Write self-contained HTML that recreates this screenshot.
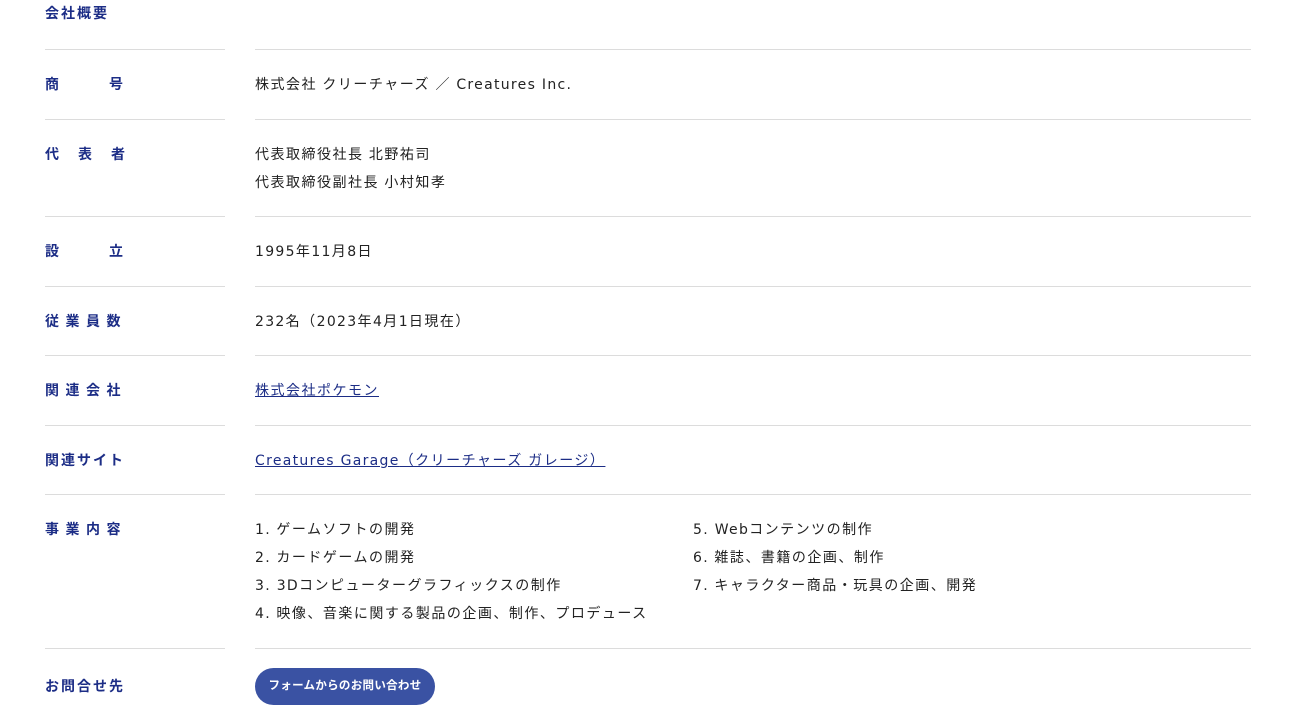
<!DOCTYPE html>
<html><head><meta charset="utf-8"><style>
body{margin:0;width:1293px;height:719px;background:#fff;position:relative;overflow:hidden;font-family:"Liberation Sans","Noto Sans CJK JP",sans-serif;}
.l{position:absolute;height:1px;background:#dcdcdc;}
.lab{position:absolute;left:45px;font-size:14px;font-weight:bold;color:#1c2d86;line-height:20px;letter-spacing:2px;white-space:nowrap;}
.t{position:absolute;font-size:14px;color:#222;line-height:20px;letter-spacing:1.5px;white-space:nowrap;}
.e{font-family:"DejaVu Sans",sans-serif;font-size:14px;letter-spacing:1.3px;}
a{color:#1c2d86;text-decoration:underline;}
.btn{position:absolute;left:255px;top:668px;width:180px;height:37px;border-radius:19px;background:#3a52a3;color:#fff;font-size:11.5px;font-weight:bold;text-align:center;line-height:37px;letter-spacing:0.3px;}
</style></head><body>
<div class="lab" style="top:3px">会社概要</div>
<div class="l" style="left:45px;width:180px;top:49px"></div><div class="l" style="left:255px;width:996px;top:49px"></div>
<div class="l" style="left:45px;width:180px;top:119px"></div><div class="l" style="left:255px;width:996px;top:119px"></div>
<div class="l" style="left:45px;width:180px;top:216px"></div><div class="l" style="left:255px;width:996px;top:216px"></div>
<div class="l" style="left:45px;width:180px;top:286px"></div><div class="l" style="left:255px;width:996px;top:286px"></div>
<div class="l" style="left:45px;width:180px;top:355px"></div><div class="l" style="left:255px;width:996px;top:355px"></div>
<div class="l" style="left:45px;width:180px;top:425px"></div><div class="l" style="left:255px;width:996px;top:425px"></div>
<div class="l" style="left:45px;width:180px;top:494px"></div><div class="l" style="left:255px;width:996px;top:494px"></div>
<div class="l" style="left:45px;width:180px;top:648px"></div><div class="l" style="left:255px;width:996px;top:648px"></div>

<div class="lab" style="top:74px">商<span style="display:inline-block;width:48px"></span>号</div>
<div class="t" style="left:255px;top:74px">株式会社 クリーチャーズ ／ <span class="e">Creatures Inc.</span></div>
<div class="lab" style="top:144px">代<span style="display:inline-block;width:17px"></span>表<span style="display:inline-block;width:17px"></span>者</div>
<div class="t" style="left:255px;top:144px">代表取締役社長 北野祐司</div>
<div class="t" style="left:255px;top:172px">代表取締役副社長 小村知孝</div>
<div class="lab" style="top:241px">設<span style="display:inline-block;width:48px"></span>立</div>
<div class="t" style="left:255px;top:241px"><span class="e">1995</span>年<span class="e">11</span>月<span class="e">8</span>日</div>
<div class="lab" style="top:311px;letter-spacing:6.5px">従業員数</div>
<div class="t" style="left:255px;top:311px"><span class="e">232</span>名（<span class="e">2023</span>年<span class="e">4</span>月<span class="e">1</span>日現在）</div>
<div class="lab" style="top:380px;letter-spacing:6.5px">関連会社</div>
<div class="t" style="left:255px;top:380px"><a>株式会社ポケモン</a></div>
<div class="lab" style="top:450px">関連サイト</div>
<div class="t" style="left:255px;top:450px"><a><span class="e">Creatures Garage</span>（クリーチャーズ ガレージ）</a></div>
<div class="lab" style="top:519px;letter-spacing:6.5px">事業内容</div>
<div class="t" style="left:255px;top:519px"><span class="e">1.</span> ゲームソフトの開発</div>
<div class="t" style="left:255px;top:547px"><span class="e">2.</span> カードゲームの開発</div>
<div class="t" style="left:255px;top:575px"><span class="e">3. 3D</span>コンピューターグラフィックスの制作</div>
<div class="t" style="left:255px;top:603px"><span class="e">4.</span> 映像、音楽に関する製品の企画、制作、プロデュース</div>
<div class="t" style="left:693px;top:519px"><span class="e">5. Web</span>コンテンツの制作</div>
<div class="t" style="left:693px;top:547px"><span class="e">6.</span> 雑誌、書籍の企画、制作</div>
<div class="t" style="left:693px;top:575px"><span class="e">7.</span> キャラクター商品・玩具の企画、開発</div>
<div class="lab" style="top:676px">お問合せ先</div>
<div class="btn">フォームからのお問い合わせ</div>
</body></html>
